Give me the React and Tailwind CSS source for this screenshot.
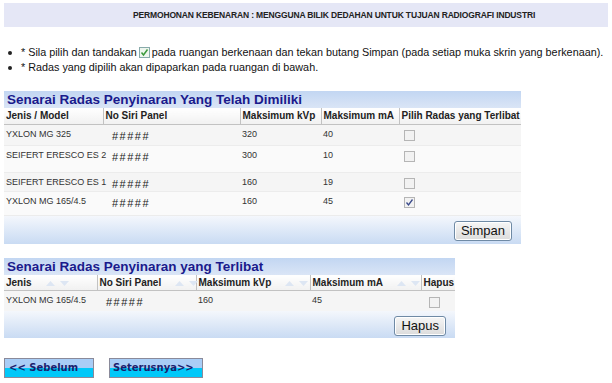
import React from "react";

// first table: owned devices
const owned = [
  { model: "YXLON MG 325", kvp: "320", ma: "40", checked: false, h: "h-[21px]" },
  { model: "SEIFERT ERESCO ES 2", kvp: "300", ma: "10", checked: false, h: "h-[27px]" },
  { model: "SEIFERT ERESCO ES 1", kvp: "160", ma: "19", checked: false, h: "h-[19px]" },
  { model: "YXLON MG 165/4.5", kvp: "160", ma: "45", checked: true, h: "h-[24px]" },
];

function Box({ checked }) {
  return (
    <span className="flex h-[11px] w-[11px] items-center justify-center border border-[#b5b5b5] bg-[#f2f2f2]">
      {checked && (
        <svg width="9" height="9" viewBox="0 0 9 9">
          <path d="M1.5 4.5 L3.5 7 L7.5 1.5" fill="none" stroke="#3a4a8a" strokeWidth="1.3" />
        </svg>
      )}
    </span>
  );
}

function Arrows() {
  return (
    <span className="ml-[14px] inline-flex items-center gap-[5px] align-middle">
      <svg width="9" height="5" viewBox="0 0 9 5">
        <path d="M0 5 L4.5 0 L9 5 Z" fill="#dde6f3" />
      </svg>
      <svg width="9" height="5" viewBox="0 0 9 5">
        <path d="M0 0 L4.5 5 L9 0 Z" fill="#dde6f3" />
      </svg>
    </span>
  );
}

function Title({ children }) {
  return (
    <div className="h-[17px] bg-gradient-to-b from-[#c2d6f2] to-[#dae5f6] pl-[3px] text-[13.5px] font-bold leading-[17px] text-[#1a1a8c]">
      {children}
    </div>
  );
}

function Footer({ label, h }) {
  return (
    <div className={`flex items-start justify-end bg-gradient-to-b from-[#f4f7fc] to-[#c9dbf3] pr-[9px] pt-[5px] ${h}`}>
      <button className="h-[20px] rounded-[3px] border border-[#6f8aa5] bg-gradient-to-b from-[#f6f6f6] to-[#dcdcdc] px-[6px] text-[13px] leading-[17px] text-[#111] shadow-[inset_0_0_0_1px_#fff]">
        {label}
      </button>
    </div>
  );
}

const th = "border-b border-r border-[#c2c2c2] bg-gradient-to-b from-white to-[#f1f1f1] px-[2px] text-left text-[10px] font-bold text-[#222] h-[16px] leading-[15px] whitespace-nowrap";
const td = "align-top text-[9px] leading-[12px] text-[#333] pl-[2px]";
const hash = "align-top pl-[9px] pt-[5px] text-[11px] leading-[12px] tracking-[1.5px] text-[#222]";

export default function App() {
  return (
    <div className="h-[383px] w-[612px] bg-white font-['Liberation_Sans',Arial,sans-serif]">
      <div className="px-[4px] pt-[3px]">
        <div className="flex h-[24px] items-center bg-[#e5e7f6] pl-[129px] text-[8.5px] font-bold tracking-[-0.15px] text-[#222]">
          PERMOHONAN KEBENARAN : MENGGUNA BILIK DEDAHAN UNTUK TUJUAN RADIOGRAFI INDUSTRI
        </div>
      </div>

      <ul className="mt-[18px] pl-[8px] text-[10.8px] leading-[15px] text-[#111]">
        <li className="flex items-center">
          <span className="mr-[9px] inline-block h-[4px] w-[4px] rounded-full bg-[#222]" />
          * Sila pilih dan tandakan
          <span className="mx-[2px] inline-flex h-[11px] w-[11px] items-center justify-center border border-[#8aa] bg-[#eef6ee]">
            <svg width="9" height="9" viewBox="0 0 9 9">
              <path d="M1.5 4.5 L3.5 7 L7.5 1.5" fill="none" stroke="#3c9a3c" strokeWidth="1.5" />
            </svg>
          </span>
          pada ruangan berkenaan dan tekan butang Simpan (pada setiap muka skrin yang berkenaan).
        </li>
        <li className="flex items-center">
          <span className="mr-[9px] inline-block h-[4px] w-[4px] rounded-full bg-[#222]" />
          * Radas yang dipilih akan dipaparkan pada ruangan di bawah.
        </li>
      </ul>

      <div className="ml-[4px] mt-[16px] w-[517px]">
        <Title>Senarai Radas Penyinaran Yang Telah Dimiliki</Title>
        <table className="w-full table-fixed border-collapse">
          <colgroup>
            <col className="w-[99px]" />
            <col className="w-[137px]" />
            <col className="w-[81px]" />
            <col className="w-[78px]" />
            <col />
          </colgroup>
          <thead>
            <tr>
              <th className={th}>Jenis / Model</th>
              <th className={th}>No Siri Panel</th>
              <th className={th}>Maksimum kVp</th>
              <th className={th}>Maksimum mA</th>
              <th className={`${th} border-r-0`}>Pilih Radas yang Terlibat</th>
            </tr>
          </thead>
          <tbody>
            {owned.map((r, i) => (
              <tr key={i} className={`${r.h} ${i % 2 === 0 ? "bg-[#f5f5f5]" : "bg-[#fafafa]"} border-b border-[#ececec]`}>
                <td className={`${td} pt-[3px] whitespace-nowrap`}>{r.model}</td>
                <td className={hash}>#####</td>
                <td className={`${td} pt-[3px]`}>{r.kvp}</td>
                <td className={`${td} pt-[3px]`}>{r.ma}</td>
                <td className="align-top pl-[5px] pt-[5px] leading-none">
                  <Box checked={r.checked} />
                </td>
              </tr>
            ))}
          </tbody>
        </table>
        <Footer label="Simpan" h="h-[28px]" />
      </div>

      <div className="ml-[4px] mt-[14px] w-[451px]">
        <Title>Senarai Radas Penyinaran yang Terlibat</Title>
        <table className="w-full table-fixed border-collapse">
          <colgroup>
            <col className="w-[93px]" />
            <col className="w-[99px]" />
            <col className="w-[114px]" />
            <col className="w-[111px]" />
            <col />
          </colgroup>
          <thead>
            <tr>
              <th className={th}>Jenis<Arrows /></th>
              <th className={th}>No Siri Panel<Arrows /></th>
              <th className={th}>Maksimum kVp<Arrows /></th>
              <th className={th}>Maksimum mA<Arrows /></th>
              <th className={`${th} border-r-0`}>Hapus</th>
            </tr>
          </thead>
          <tbody>
            <tr className="h-[20px] bg-[#f5f5f5]">
              <td className={`${td} pt-[3px] whitespace-nowrap`}>YXLON MG 165/4.5</td>
              <td className={hash}>#####</td>
              <td className={`${td} pt-[3px]`}>160</td>
              <td className={`${td} pt-[3px]`}>45</td>
              <td className="align-top pl-[8px] pt-[6px] leading-none">
                <Box checked={false} />
              </td>
            </tr>
          </tbody>
        </table>
        <Footer label="Hapus" h="h-[27px]" />
      </div>

      <div className="ml-[4px] mt-[20px] flex gap-[15px]">
        <button className="h-[20px] w-[90px] border border-[#8a8a9a] bg-gradient-to-b from-[#a9cdf6] from-50% to-[#00c8f9] to-50% pl-[4px] text-left font-['DejaVu_Sans',Verdana,sans-serif] text-[10px] font-bold text-[#1b1f6e]">
          &lt;&lt; Sebelum
        </button>
        <button className="h-[20px] w-[94px] border border-[#8a8a9a] bg-gradient-to-b from-[#a9cdf6] from-50% to-[#00c8f9] to-50% pl-[3px] text-left font-['DejaVu_Sans',Verdana,sans-serif] text-[10px] font-bold text-[#1b1f6e]">
          Seterusnya&gt;&gt;
        </button>
      </div>
    </div>
  );
}
